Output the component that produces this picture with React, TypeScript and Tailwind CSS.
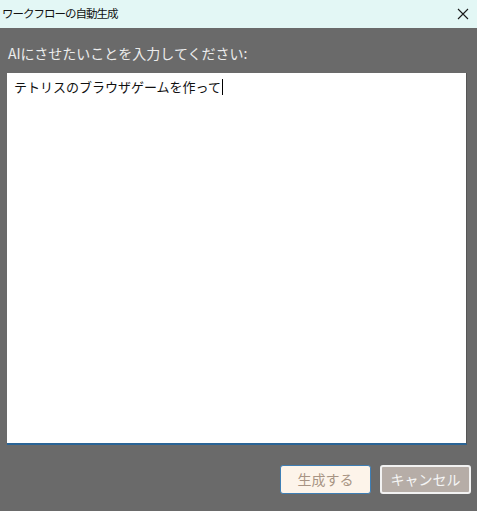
const jp = { fontFamily: '"Noto Sans CJK JP", "Noto Sans", sans-serif' };

function CloseIcon() {
  return (
    <svg width="12" height="12" viewBox="0 0 12 12" fill="none" stroke="#1a1a1a" strokeWidth="1.1">
      <path d="M1 1 L11 11 M11 1 L1 11" />
    </svg>
  );
}

export default function App() {
  return (
    <div className="w-[477px] h-[511px] flex flex-col bg-[#6a6a6a]" style={jp}>
      {/* title bar */}
      <div className="h-[28px] bg-[#e3f7f5] flex items-center justify-between pl-[2px] pr-[8px]">
        <span className="text-[11.5px] tracking-[-1px] text-[#111]">ワークフローの自動生成</span>
        <CloseIcon />
      </div>

      <div className="flex-1 flex flex-col pl-[7px] pr-[6px]">
        <label className="mt-[15px] h-[20px] leading-[20px] pl-[1px] text-[14px] text-[#ececec]">
          AIにさせたいことを入力してください:
        </label>

        {/* prompt input */}
        <div className="mt-[10px] w-[460px] h-[372px] bg-white border-b-2 border-[#2a6496] border-r border-r-[#555] px-[7px] pt-[4px]">
          <div className="flex items-center text-[13px] leading-[20px] text-[#111]">
            <span>テトリスのブラウザゲームを作って</span>
            <span className="inline-block w-px h-[16px] bg-black ml-[1px]" />
          </div>
        </div>

        <div className="mt-[20px] flex justify-end gap-[9px]">
          <button className="w-[91px] h-[29px] rounded-[3px] border border-[#3f7fb5] bg-[#fdf4ea] text-[14px] text-[#a89484]">
            生成する
          </button>
          <button className="w-[91px] h-[29px] rounded-[3px] border-2 border-[#f2f2f2] bg-[#b6ada7] text-[14px] text-[#f5f5f5]">
            キャンセル
          </button>
        </div>
      </div>
    </div>
  );
}
